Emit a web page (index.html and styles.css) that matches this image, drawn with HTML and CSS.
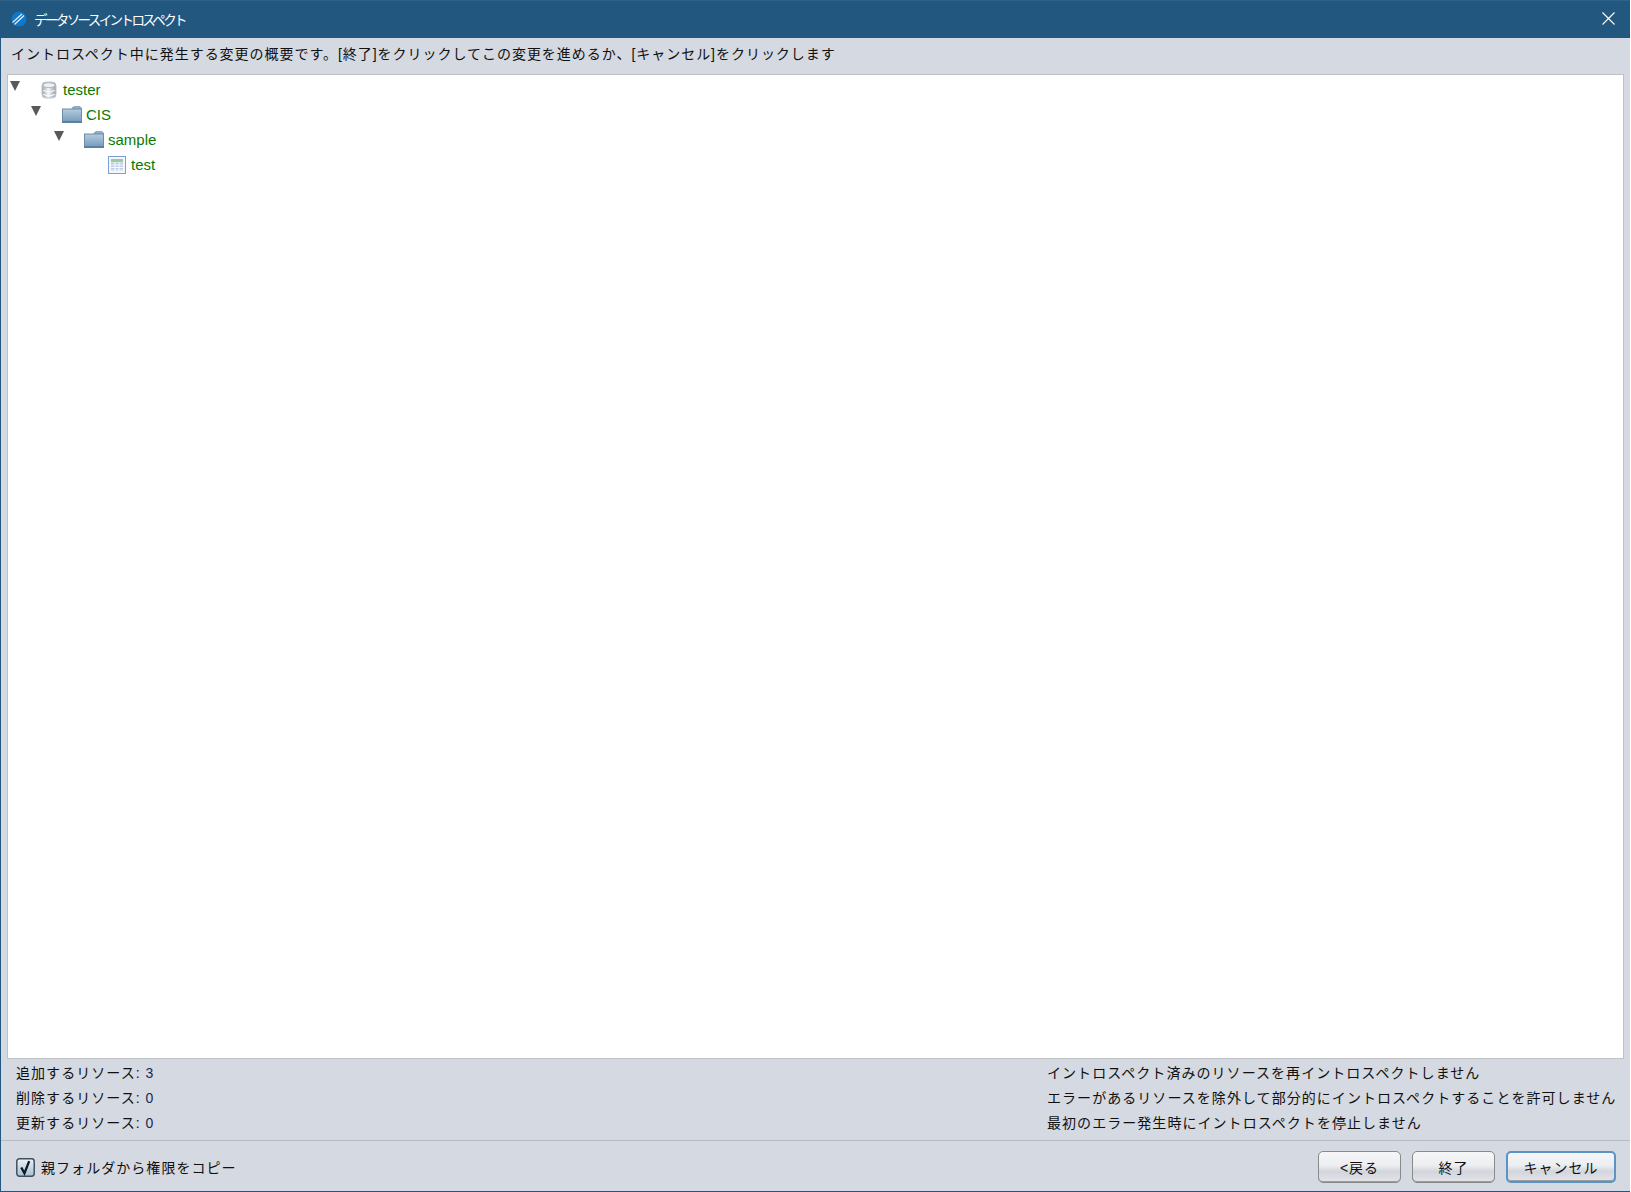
FILE: index.html
```html
<!DOCTYPE html>
<html lang="ja">
<head>
<meta charset="utf-8">
<title>データソースイントロスペクト</title>
<link rel="stylesheet" href="styles.css">
</head>
<body>
<div class="window">
  <header class="titlebar">
    <svg class="app-icon" width="16" height="16" viewBox="0 0 16 16"><circle cx="8" cy="8" r="7.5" fill="#1178c8"/><path d="M1.5 11.5 L11 3 M3.5 13.5 L13 4.5" stroke="#e4f0fa" stroke-width="1.1" fill="none"/></svg>
    <span class="title">データソースイントロスペクト</span>
    <svg class="close" width="13" height="13" viewBox="0 0 13 13"><path d="M.5 .5 L12.5 12.5 M12.5 .5 L.5 12.5" stroke="#fff" stroke-width="1.1" fill="none"/></svg>
  </header>
  <p class="message">イントロスペクト中に発生する変更の概要です。[終了]をクリックしてこの変更を進めるか、[キャンセル]をクリックします</p>
  <main class="tree">
    <div class="row lvl0">
      <span class="arrow"></span>
      <svg class="icon db" width="18" height="18" viewBox="0 0 18 18"><defs><linearGradient id="db" x1="0" x2="1" y1="0" y2="0"><stop offset="0" stop-color="#979dac"/><stop offset=".45" stop-color="#f6f7fa"/><stop offset="1" stop-color="#9599a8"/></linearGradient></defs><rect x="2" y="1" width="14" height="16" rx="4" fill="url(#db)" stroke="#c0c3cc"/><ellipse cx="9" cy="4.2" rx="6" ry="2.4" fill="#f0f1f5" stroke="#a6a9b4" stroke-width=".8"/><path d="M3 9.5 Q9 12.5 15 9.5 M3 13.5 Q9 16.5 15 13.5" stroke="#fff" stroke-width="1" fill="none"/></svg>
      <span class="label">tester</span>
    </div>
    <div class="row lvl1">
      <span class="arrow"></span>
      <svg class="icon folder" width="20" height="17" viewBox="0 0 20 17"><defs><linearGradient id="fd" x1="0" x2="0" y1="0" y2="1"><stop offset="0" stop-color="#b4cde0"/><stop offset="1" stop-color="#7298b8"/></linearGradient></defs><path d="M10 2 L12 .5 H18 L19.5 2 V5 H10 Z" fill="#8fb0c8" stroke="#6f8fa8" stroke-width=".6"/><rect x=".5" y="3" width="19" height="13.5" fill="url(#fd)" stroke="#6c8ca8"/><rect x="0" y="15" width="20" height="2" fill="#5f7f9c"/></svg>
      <span class="label">CIS</span>
    </div>
    <div class="row lvl2">
      <span class="arrow"></span>
      <svg class="icon folder" width="20" height="17" viewBox="0 0 20 17"><path d="M10 2 L12 .5 H18 L19.5 2 V5 H10 Z" fill="#8fb0c8" stroke="#6f8fa8" stroke-width=".6"/><rect x=".5" y="3" width="19" height="13.5" fill="url(#fd)" stroke="#6c8ca8"/><rect x="0" y="15" width="20" height="2" fill="#5f7f9c"/></svg>
      <span class="label">sample</span>
    </div>
    <div class="row lvl3">
      <span class="arrow none"></span>
      <svg class="icon" width="18" height="18" viewBox="0 0 18 18"><rect x=".5" y=".5" width="17" height="17" fill="#f4f7fd" stroke="#7a9fd4"/><rect x="3" y="3" width="12" height="3" fill="#98cc9e"/><path d="M3 6.5 H15 V15 H3 Z" fill="#bccbe6"/><path d="M3 9 H15 M3 11.5 H15 M3 14 H15 M7 6.5 V15 M11 6.5 V15" stroke="#fff" stroke-width=".9"/></svg>
      <span class="label">test</span>
    </div>
  </main>
  <section class="summary">
    <ul class="counts">
      <li>追加するリソース: <b>3</b></li>
      <li>削除するリソース: <b>0</b></li>
      <li>更新するリソース: <b>0</b></li>
    </ul>
    <ul class="options">
      <li>イントロスペクト済みのリソースを再イントロスペクトしません</li>
      <li>エラーがあるリソースを除外して部分的にイントロスペクトすることを許可しません</li>
      <li>最初のエラー発生時にイントロスペクトを停止しません</li>
    </ul>
  </section>
  <footer class="footer">
    <label class="check">
      <svg width="19" height="19" viewBox="0 0 18 18"><defs><linearGradient id="cb" x1="0" x2="0" y1="0" y2="1"><stop offset="0" stop-color="#eef2f6"/><stop offset="1" stop-color="#a9c0d4"/></linearGradient></defs><rect x=".75" y=".75" width="16.5" height="16.5" rx="2.5" fill="url(#cb)" stroke="#3f4f5e" stroke-width="1.4"/><path d="M5 9 L8 14.5 L12.5 3" stroke="#0d1a24" stroke-width="2.2" fill="none"/></svg>
      <span>親フォルダから権限をコピー</span>
    </label>
    <div class="buttons">
      <button class="btn" type="button">&lt;戻る</button>
      <button class="btn" type="button">終了</button>
      <button class="btn primary" type="button">キャンセル</button>
    </div>
  </footer>
</div>
</body>
</html>
```

FILE: styles.css
```css
html, body {
  margin: 0;
  padding: 0;
  height: 100%;
  background: #fff;
}
body {
  font-family: "Liberation Sans", "Noto Sans CJK JP", sans-serif;
  font-size: 14px;
  color: #101010;
}
.window {
  box-sizing: border-box;
  width: 1630px;
  height: 1192px;
  display: flex;
  flex-direction: column;
  background: #d5d9e1;
  border-left: 1px solid #22577f;
  border-bottom: 1px solid #22577f;
}
.titlebar {
  flex: none;
  height: 38px;
  display: flex;
  align-items: center;
  background: #22577f;
  color: #fff;
  padding-left: 11px;
  padding-right: 15px;
  padding-bottom: 2px;
  margin-left: -1px;
  border-top: 1px solid #2f6288;
  box-sizing: border-box;
}
.app-icon { flex: none; margin-right: 7px; }
.title { font-size: 13.5px; letter-spacing: -2.6px; flex: 1; }
.close { flex: none; }
.message {
  flex: none;
  margin: 0;
  height: 36px;
  line-height: 33px;
  padding-left: 10px;
  font-size: 14px;
  letter-spacing: .97px;
  white-space: nowrap;
}
.tree {
  flex: none;
  box-sizing: border-box;
  height: 985px;
  margin-left: 6px;
  margin-right: 6px;
  background: #fff;
  border: 1px solid #bfc1c5;
  padding-top: 2px;
}
.row {
  height: 25px;
  display: flex;
  align-items: center;
  color: #0a7a00;
  font-size: 15px;
}
.arrow {
  flex: none;
  width: 0;
  height: 0;
  border-left: 5px solid transparent;
  border-right: 5px solid transparent;
  border-top: 10px solid #595959;
  margin-top: -7px;
}
.arrow.none { visibility: hidden; }
.lvl0 { padding-left: 2px; }
.lvl1 { padding-left: 23px; }
.lvl2 { padding-left: 46px; }
.lvl3 { padding-left: 69px; }
.icon { flex: none; margin-left: 21px; margin-right: 4px; }
.db { margin-left: 20px; margin-right: 5px; }
.folder { margin-left: 21px; margin-right: 4px; }
.lvl2 .folder { margin-left: 20px; }
.lvl3 .icon { margin-left: 21px; margin-right: 5px; }
.label { display: block; }
.summary {
  flex: none;
  display: flex;
  justify-content: space-between;
  height: 81px;
  border-bottom: 1px solid #b6bbc4;
}
.counts, .options {
  list-style: none;
  margin: 0;
  padding: 2px 0 0;
}
.counts { padding-left: 15px; }
.options { width: 583px; }
.counts li, .options li {
  height: 25px;
  line-height: 25px;
  letter-spacing: 1.05px;
  white-space: nowrap;
}
.counts b { font-weight: 400; color: #1a2a55; }
.footer {
  flex: 1;
  display: flex;
  align-items: center;
  justify-content: space-between;
  padding: 2px 14px 0 15px;
}
.check {
  display: flex;
  align-items: center;
  gap: 6px;
  letter-spacing: 1.05px;
}
.buttons { display: flex; gap: 11px; }
.btn {
  box-sizing: border-box;
  width: 83px;
  height: 32px;
  padding: 0;
  font: inherit;
  color: #101010;
  letter-spacing: 1px;
  border: 1px solid #8a8a8a;
  border-radius: 5px;
  background: linear-gradient(#f6f6f8 0%, #eceef1 45%, #d2d5dc 65%, #e3e5ea 100%);
  box-shadow: inset 0 -1px 0 #9c9c9c;
}
.btn.primary {
  width: 110px;
  border: 2px solid #5b93c4;
}
```
